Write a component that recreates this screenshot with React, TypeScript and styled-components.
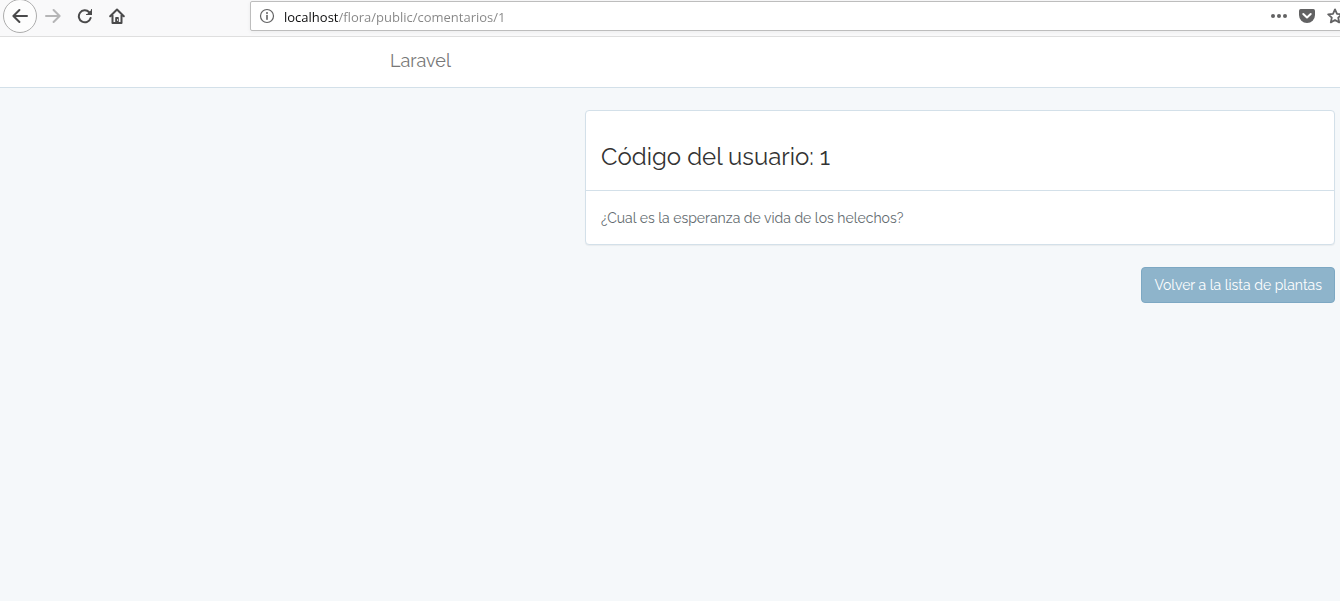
import React from "react";
import styled, { createGlobalStyle } from "styled-components";

const GlobalStyle = createGlobalStyle`
  *, *::before, *::after { box-sizing: border-box; }
  html { background: #f5f8fa; }
  body {
    margin: 0;
    min-height: 100vh;
    background: #f5f8fa;
    color: #636b6f;
    font-family: Raleway, Lato, sans-serif;
    font-size: 14px;
    line-height: 22px;
    overflow-x: hidden;
  }
`;

const Toolbar = styled.header`
  display: flex;
  align-items: flex-start;
  height: 37px;
  overflow: hidden;
  background: #f9f9fa;
  border-bottom: 1px solid #dfdfdf;
`;

const NavButtons = styled.div`
  display: flex;
  align-items: center;
  flex: 0 0 250px;
  height: 32px;
  padding-left: 3px;
`;

const ToolButton = styled.button<{ $round?: boolean }>`
  display: flex;
  align-items: center;
  justify-content: center;
  flex: none;
  width: ${(p) => (p.$round ? 34 : 32)}px;
  height: ${(p) => (p.$round ? 34 : 32)}px;
  padding: 0;
  color: #4a4a4b;
  background: ${(p) => (p.$round ? "#fdfdfd" : "transparent")};
  border: ${(p) => (p.$round ? "1px solid #adadad" : "0")};
  border-radius: 50%;

  &:disabled { color: #b5b5b6; }
`;

const UrlBar = styled.form`
  display: flex;
  align-items: center;
  flex: 1;
  height: 30px;
  margin: 1px -12px 0 0;
  padding: 0 8px;
  background: #fff;
  border: 1px solid #bdbdbd;
  border-radius: 2px;
  box-shadow: 0 1px 4px rgba(0, 0, 0, 0.06);
`;

const Address = styled.input`
  flex: 1;
  min-width: 0;
  height: 22px;
  margin-left: 9px;
  padding: 1px 0 0;
  border: 0;
  outline: 0;
  font: 13px/20px "Open Sans", "Noto Sans", sans-serif;
  color: transparent;
  caret-color: #0c0c0d;
  background: linear-gradient(90deg, #0c0c0d 54px, #858585 54px);
  -webkit-background-clip: text;
  background-clip: text;
`;

const UrlActions = styled.div`
  display: flex;
  align-items: center;
  gap: 12px;
`;

const IconButton = styled.button`
  display: flex;
  padding: 0;
  color: #626263;
  background: none;
  border: 0;
`;

const Navbar = styled.nav`
  display: flex;
  align-items: center;
  height: 51px;
  padding: 0 15px 2px 390px;
  background: #fff;
  border-bottom: 1px solid #d3e0e9;
`;

const Brand = styled.a`
  color: #777;
  font-size: 18px;
  line-height: 22px;
  text-decoration: none;
`;

const Content = styled.main`
  display: flex;
  flex-direction: column;
  gap: 22px;
  padding: 22px 5px 22px 585px;
`;

const Panel = styled.section`
  background: #fff;
  border: 1px solid #d3e0e9;
  border-radius: 4px;
  box-shadow: 0 1px 1px rgba(0, 0, 0, 0.05);
`;

const PanelHeading = styled.div`
  padding: 32px 15px 20px;
  border-bottom: 1px solid #d3e0e9;
`;

const Title = styled.h1`
  margin: 0;
  color: #333;
  font-size: 24px;
  font-weight: 400;
  line-height: 27px;
`;

const PanelBody = styled.div`
  padding: 16px 15px 15px;
`;

const BackLink = styled.a`
  align-self: flex-end;
  padding: 6px 12px;
  color: #fff;
  background: #8eb4cb;
  border: 1px solid #7da8c3;
  border-radius: 4px;
  text-decoration: none;
`;

const Icon = ({ children, size = 16 }: { children: React.ReactNode; size?: number }) => (
  <svg width={size} height={size} viewBox="0 0 16 16" fill="none" stroke="currentColor" strokeWidth="2" strokeLinecap="round" strokeLinejoin="round" aria-hidden="true">
    {children}
  </svg>
);

export default function App() {
  return (
    <>
      <GlobalStyle />
      <Toolbar>
        <NavButtons>
          <ToolButton $round type="button" aria-label="Atrás">
            <Icon><path d="M15 8H1.6M7.4 2 1.4 8l6 6" /></Icon>
          </ToolButton>
          <ToolButton type="button" aria-label="Adelante" disabled>
            <Icon><path d="M1 8h13.4M8.6 2l6 6-6 6" /></Icon>
          </ToolButton>
          <ToolButton type="button" aria-label="Recargar">
            <Icon>
              <path d="M12.2 4.2A6 6 0 1 0 13.6 10" />
              <path d="M15 1.2V7H9.2Z" fill="currentColor" stroke="none" />
              <path d="M14.5 1.5V6.5H9.5" strokeWidth="1" />
            </Icon>
          </ToolButton>
          <ToolButton type="button" aria-label="Inicio">
            <Icon>
              <path d="M1.2 8.2 8 1.5l6.8 6.7M3.5 7.2V15h9V7.2" />
              <path d="M6.2 15V9.8q0-.8.8-.8h2q.8 0 .8.8V15Z" fill="currentColor" stroke="none" />
              <path d="M8.5 11.6v.8" stroke="#f9f9fa" strokeWidth="1" />
            </Icon>
          </ToolButton>
        </NavButtons>
        <UrlBar onSubmit={(e) => e.preventDefault()}>
          <IconButton type="button" aria-label="Información del sitio">
            <Icon>
              <circle cx="8" cy="8" r="6.5" strokeWidth="1.2" />
              <path d="M8 7.6v3.6" strokeWidth="1.6" />
              <circle cx="8" cy="4.9" r="1" fill="currentColor" stroke="none" />
            </Icon>
          </IconButton>
          <Address aria-label="Dirección" defaultValue="localhost/flora/public/comentarios/1" spellCheck={false} />
          <UrlActions>
            <IconButton type="button" aria-label="Acciones de página">
              <Icon>
                <g fill="currentColor" stroke="none">
                  <circle cx="2" cy="8" r="2" /><circle cx="8" cy="8" r="2" /><circle cx="14" cy="8" r="2" />
                </g>
              </Icon>
            </IconButton>
            <IconButton type="button" aria-label="Guardar en Pocket">
              <Icon>
                <path d="M1.7 1h12.6Q16 1 16 2.7V7a8 8 0 0 1-16 0V2.7Q0 1 1.7 1Z" fill="currentColor" stroke="none" />
                <path d="M4.3 6 8 9.5 11.7 6" stroke="#fff" />
              </Icon>
            </IconButton>
            <IconButton type="button" aria-label="Añadir a marcadores">
              <Icon>
                <path d="m8 1.4 2 4.4 4.8.6-3.6 3.2 1 4.8L8 12l-4.2 2.4 1-4.8L1.2 6.4 6 5.8Z" strokeWidth="1.8" />
              </Icon>
            </IconButton>
          </UrlActions>
        </UrlBar>
      </Toolbar>
      <Navbar>
        <Brand href="#">Laravel</Brand>
      </Navbar>
      <Content>
        <Panel>
          <PanelHeading>
            <Title>Código del usuario: 1</Title>
          </PanelHeading>
          <PanelBody>¿Cual es la esperanza de vida de los helechos?</PanelBody>
        </Panel>
        <BackLink href="#">Volver a la lista de plantas</BackLink>
      </Content>
    </>
  );
}
